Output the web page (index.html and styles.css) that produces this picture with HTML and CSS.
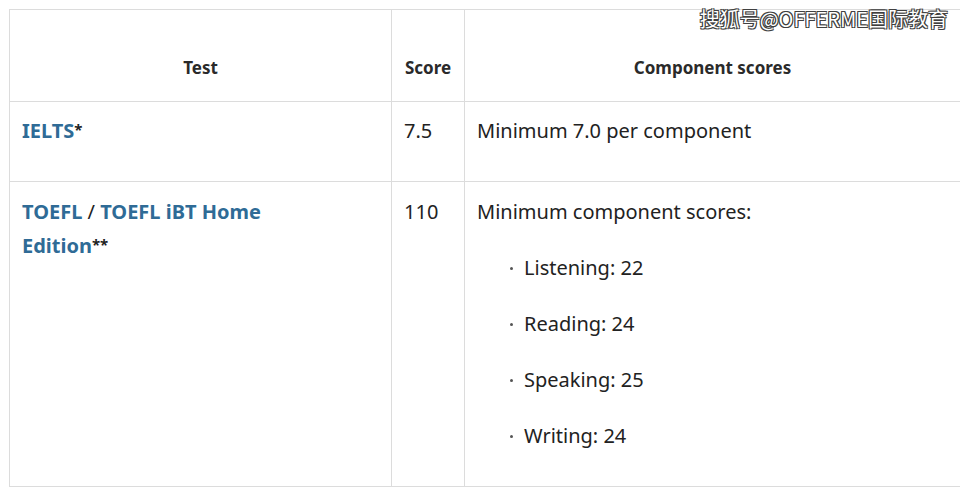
FILE: index.html
```html
<!DOCTYPE html>
<html>
<head>
<meta charset="utf-8">
<link rel="stylesheet" href="styles.css">
</head>
<body>
<div class="wrap">
  <table class="tbl">
    <colgroup>
      <col class="c1"><col class="c2"><col class="c3">
    </colgroup>
    <thead>
      <tr class="head">
        <th>Test</th>
        <th>Score</th>
        <th>Component scores</th>
      </tr>
    </thead>
    <tbody>
      <tr class="r1">
        <td><a class="lnk" href="#">IELTS</a><span class="star">*</span></td>
        <td>7.5</td>
        <td>Minimum 7.0 per component</td>
      </tr>
      <tr class="r2">
        <td><div class="names"><a class="lnk" href="#">TOEFL</a> / <a class="lnk" href="#">TOEFL iBT Home Edition</a><span class="star">**</span></div></td>
        <td>110</td>
        <td>
          <p class="intro">Minimum component scores:</p>
          <ul class="list">
            <li>Listening: 22</li>
            <li>Reading: 24</li>
            <li>Speaking: 25</li>
            <li>Writing: 24</li>
          </ul>
        </td>
      </tr>
    </tbody>
  </table>
  <div class="mark">搜狐号@OFFERME国际教育</div>
</div>
</body>
</html>
```

FILE: styles.css
```css
html, body {
  margin: 0;
  padding: 0;
  background: #fff;
}
body {
  font-family: "Noto Sans", "Open Sans", sans-serif;
  color: #222;
}
.wrap {
  position: relative;
  padding: 9px 0 0 9px;
  width: 951px;
  height: 482px;
  overflow: hidden;
}
.tbl {
  border-collapse: collapse;
  width: 951px;
  table-layout: fixed;
}
.c1 { width: 382px; }
.c2 { width: 73px; }
.c3 { width: 496px; }
.tbl th, .tbl td {
  border: 1px solid #dcdcdc;
  padding: 0 12px;
  text-align: left;
}
.head th {
  height: 92px;
  box-sizing: border-box;
  padding-top: 24px;
  font-size: 17px;
  font-weight: 700;
  text-align: center;
  vertical-align: middle;
  color: #2a2a2a;
}
.r1 td {
  height: 80px;
  vertical-align: top;
  font-size: 20px;
  padding-top: 14px;
  padding-bottom: 0;
  box-sizing: border-box;
  line-height: 30px;
}
.r2 td {
  height: 305px;
  vertical-align: top;
  font-size: 20px;
  padding-top: 13px;
  line-height: 34px;
  box-sizing: border-box;
}
.names {
  max-width: 260px;
}
.lnk {
  color: #2f6b96;
  font-weight: 700;
  text-decoration: none;
}
.star {
  font-weight: 700;
  font-size: 15px;
  line-height: 1;
  vertical-align: 3px;
}
.intro {
  margin: 0;
}
.list {
  list-style: none;
  margin: 22px 0 0 0;
  padding: 0 0 0 33px;
}
.list li {
  position: relative;
  padding-left: 14px;
  line-height: 34px;
  margin-bottom: 22px;
}
.list li::before {
  content: "";
  position: absolute;
  left: 0;
  top: 16px;
  width: 3px;
  height: 3px;
  border-radius: 50%;
  background: #555;
}
.mark {
  position: absolute;
  right: 12px;
  top: 6px;
  font-family: "Noto Sans CJK SC", sans-serif;
  font-size: 20px;
  color: #fff;
  text-shadow: 0 0 1px #333, 0 0 1px #333, 1px 1px 0 #444, -1px -1px 0 #444, 1px -1px 0 #444, -1px 1px 0 #444;
  letter-spacing: 0;
  line-height: 26px;
}
```
